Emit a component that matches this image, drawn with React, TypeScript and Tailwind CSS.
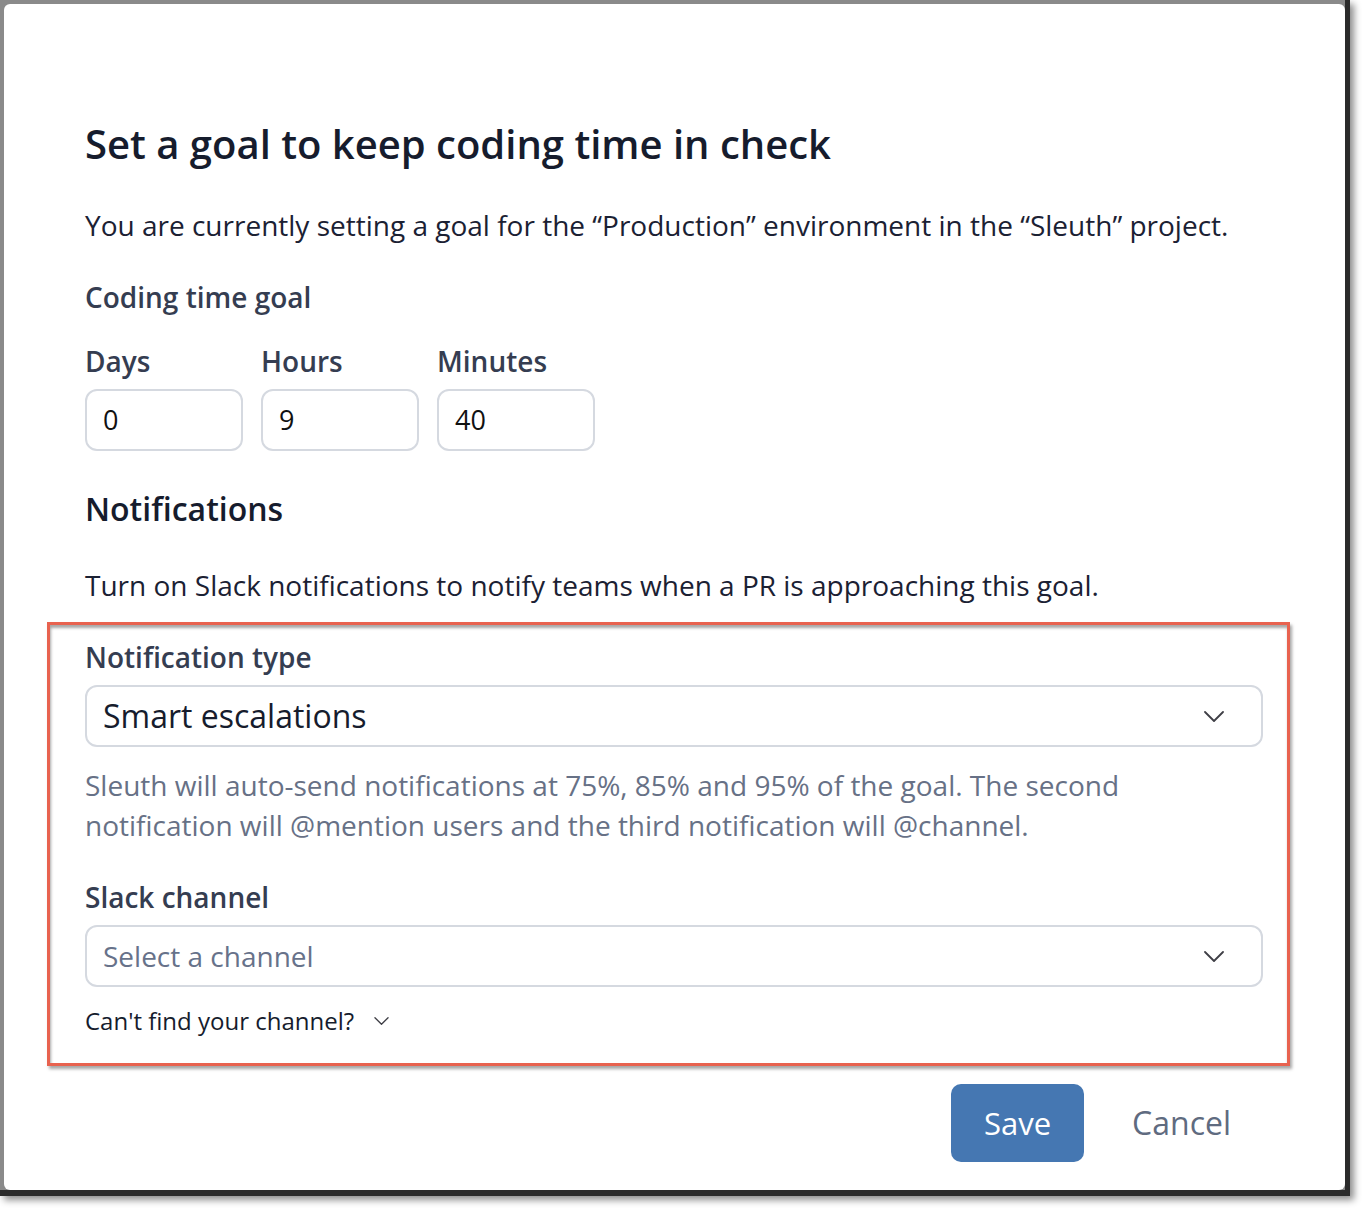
import React from "react";

const Chevron = ({ w = 20, h = 11, className = "" }: { w?: number; h?: number; className?: string }) => (
  <svg width={w} height={h} viewBox="0 0 20 11" className={className} fill="none">
    <path d="M1 1 L10 10 L19 1" stroke="#3f3f46" strokeWidth="1.8" strokeLinecap="round" strokeLinejoin="round" />
  </svg>
);

const NumInput = ({ label, value }: { label: string; value: string }) => (
  <div className="flex flex-col">
    <div className="text-[28px] leading-[40px] font-semibold text-[#353d51]">{label}</div>
    <div className="mt-2 w-[158px] h-[62px] border-2 border-[#d5d9e0] rounded-[12px] flex items-center pl-[16px] text-[27px] text-[#111111]">
      {value}
    </div>
  </div>
);

export default function App() {
  return (
    <div className="w-[1370px] h-[1214px] bg-white" style={{ fontFamily: '"Open Sans", "Noto Sans", sans-serif' }}>
      <div className="w-[1350px] h-[1196px] bg-[#8a8a8a] pt-1 pl-1 border-r-[5px] border-b-[6px] border-[#2b2b2b] shadow-[4px_4px_7px_rgba(0,0,0,0.45)]">
        <div className="w-[1341px] h-[1186px] bg-white rounded-[6px] pl-[81px] pt-[116px]">
          <div className="w-[1178px] flex flex-col">
            <h1 className="text-[40px] leading-[48px] font-semibold text-[#161c2d] whitespace-nowrap">
              Set a goal to keep coding time in check
            </h1>
            <p className="mt-[37px] text-[28px] leading-[40px] text-[#1b2133] whitespace-nowrap">
              You are currently setting a goal for the “Production” environment in the “Sleuth” project.
            </p>
            <div className="mt-[32px] text-[28px] leading-[40px] font-semibold text-[#353d51]">Coding time goal</div>
            <div className="mt-[24px] flex gap-[18px]">
              <NumInput label="Days" value="0" />
              <NumInput label="Hours" value="9" />
              <NumInput label="Minutes" value="40" />
            </div>
            <h2 className="mt-[38px] text-[32px] leading-[40px] font-semibold text-[#161c2d]">Notifications</h2>
            <p className="mt-[36px] text-[28px] leading-[40px] text-[#1b2133] whitespace-nowrap">
              Turn on Slack notifications to notify teams when a PR is approaching this goal.
            </p>
            <div className="mt-[17px] -ml-[38px] w-[1243px] border-[3px] border-[#e8624f] pl-[35px] pr-[24px] pt-[12px] pb-[26px] shadow-[2px_3px_3px_rgba(0,0,0,0.35),inset_1px_3px_3px_rgba(0,0,0,0.35)]">
              <div className="text-[28px] leading-[40px] font-semibold text-[#353d51]">Notification type</div>
              <div className="mt-2 h-[62px] border-2 border-[#d5d9e0] rounded-[12px] flex items-center justify-between pl-[16px] pr-[37px]">
                <span className="text-[32px] text-[#161c2d]">Smart escalations</span>
                <Chevron />
              </div>
              <p className="mt-[18px] text-[28px] leading-[40px] text-[#677186] whitespace-nowrap">
                Sleuth will auto-send notifications at 75%, 85% and 95% of the goal. The second
                <br />
                notification will @mention users and the third notification will @channel.
              </p>
              <div className="mt-[32px] text-[28px] leading-[40px] font-semibold text-[#353d51]">Slack channel</div>
              <div className="mt-2 h-[62px] border-2 border-[#d5d9e0] rounded-[12px] flex items-center justify-between pl-[16px] pr-[37px]">
                <span className="text-[28px] text-[#67728a]">Select a channel</span>
                <Chevron />
              </div>
              <div className="mt-[18px] flex items-center gap-[20px] text-[24px] leading-[32px] text-[#161c2d]">
                <span>Can't find your channel?</span>
                <Chevron w={15} h={8} />
              </div>
            </div>
            <div className="mt-[18px] flex justify-end items-center gap-4">
              <button className="w-[133px] h-[78px] bg-[#4577b2] rounded-[10px] text-white text-[31px]">Save</button>
              <button className="h-[78px] px-[32px] text-[32px] text-[#5f6b80]">Cancel</button>
            </div>
          </div>
        </div>
      </div>
    </div>
  );
}
